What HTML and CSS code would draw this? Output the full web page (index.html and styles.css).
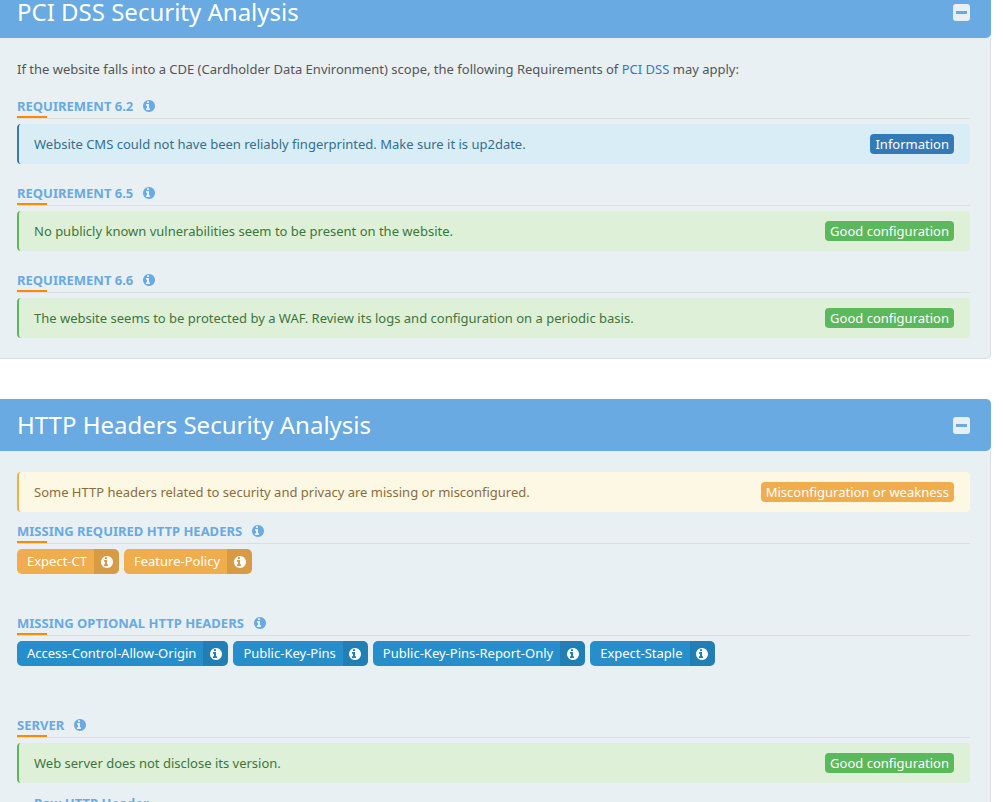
FILE: index.html
```html
<!DOCTYPE html>
<html lang="en">
<head>
<meta charset="utf-8">
<title>Website Security Test</title>
<link rel="stylesheet" href="styles.css">
</head>
<body>
<svg class="sprite" aria-hidden="true">
  <symbol id="info" viewBox="128 128 1536 1536"><path d="M1024 1376v-160q0-14-9-23t-23-9h-96v-512q0-14-9-23t-23-9h-320q-14 0-23 9t-9 23v160q0 14 9 23t23 9h96v320h-96q-14 0-23 9t-9 23v160q0 14 9 23t23 9h448q14 0 23-9t9-23zM896 480v-160q0-14-9-23t-23-9h-192q-14 0-23 9t-9 23v160q0 14 9 23t23 9h192q14 0 23-9t9-23zM1664 896q0 209-103 385.5t-279.5 279.5-385.5 103-385.5-103-279.5-279.5-103-385.5 103-385.5 279.5-279.5 385.5-103 385.5 103 279.5 279.5 103 385.5z" transform="translate(0 0)"/></symbol>
  <symbol id="minus" viewBox="0 0 17 17"><path fill-rule="evenodd" d="M3 0h11a3 3 0 0 1 3 3v11a3 3 0 0 1-3 3H3a3 3 0 0 1-3-3V3a3 3 0 0 1 3-3zM3 7v3h11V7z"/></symbol>
</svg>
<main class="page">
  <section class="panel">
    <header class="panel-header">
      <h2 class="panel-title">PCI DSS Security Analysis</h2>
      <button class="toggle" type="button" aria-label="Collapse PCI DSS Security Analysis"><svg class="toggle-icon"><use href="#minus"/></svg></button>
    </header>
    <div class="panel-body">
      <p class="intro">If the website falls into a CDE (Cardholder Data Environment) scope, the following Requirements of <a class="link" href="#">PCI DSS</a> may apply:</p>
      <h3 class="heading">REQUIREMENT 6.2 <svg class="icon"><use href="#info"/></svg></h3>
      <div class="alert info"><span>Website CMS could not have been reliably fingerprinted. Make sure it is up2date.</span><span class="label">Information</span></div>
      <h3 class="heading">REQUIREMENT 6.5 <svg class="icon"><use href="#info"/></svg></h3>
      <div class="alert good"><span>No publicly known vulnerabilities seem to be present on the website.</span><span class="label">Good configuration</span></div>
      <h3 class="heading">REQUIREMENT 6.6 <svg class="icon"><use href="#info"/></svg></h3>
      <div class="alert good"><span>The website seems to be protected by a WAF. Review its logs and configuration on a periodic basis.</span><span class="label">Good configuration</span></div>
    </div>
  </section>
  <section class="panel">
    <header class="panel-header">
      <h2 class="panel-title">HTTP Headers Security Analysis</h2>
      <button class="toggle" type="button" aria-label="Collapse HTTP Headers Security Analysis"><svg class="toggle-icon"><use href="#minus"/></svg></button>
    </header>
    <div class="panel-body">
      <div class="alert warning summary"><span>Some HTTP headers related to security and privacy are missing or misconfigured.</span><span class="label">Misconfiguration or weakness</span></div>
      <h3 class="heading">MISSING REQUIRED HTTP HEADERS <svg class="icon"><use href="#info"/></svg></h3>
      <ul class="tags required">
        <li class="tag"><span class="tag-name">Expect-CT</span><span class="tag-info"><svg class="icon"><use href="#info"/></svg></span></li>
        <li class="tag"><span class="tag-name">Feature-Policy</span><span class="tag-info"><svg class="icon"><use href="#info"/></svg></span></li>
      </ul>
      <h3 class="heading">MISSING OPTIONAL HTTP HEADERS <svg class="icon"><use href="#info"/></svg></h3>
      <ul class="tags optional">
        <li class="tag"><span class="tag-name">Access-Control-Allow-Origin</span><span class="tag-info"><svg class="icon"><use href="#info"/></svg></span></li>
        <li class="tag"><span class="tag-name">Public-Key-Pins</span><span class="tag-info"><svg class="icon"><use href="#info"/></svg></span></li>
        <li class="tag"><span class="tag-name">Public-Key-Pins-Report-Only</span><span class="tag-info"><svg class="icon"><use href="#info"/></svg></span></li>
        <li class="tag"><span class="tag-name">Expect-Staple</span><span class="tag-info"><svg class="icon"><use href="#info"/></svg></span></li>
      </ul>
      <h3 class="heading">SERVER <svg class="icon"><use href="#info"/></svg></h3>
      <div class="alert good server"><span>Web server does not disclose its version.</span><span class="label">Good configuration</span></div>
      <h4 class="raw-title">Raw HTTP Header</h4>
    </div>
  </section>
</main>
</body>
</html>
```
FILE: styles.css
```css
* { box-sizing: border-box; }
body {
  margin: 0;
  background: #fff;
  color: #555;
  font: 13px/20px "Noto Sans", "Open Sans", sans-serif;
}
.sprite { display: none; }
.page {
  display: flex;
  flex-direction: column;
  gap: 40px;
  height: 100vh;
  padding-right: 12px;
  overflow: hidden;
}
.panel {
  flex: none;
  background: #e8f0f4;
  border-radius: 0 5px 5px 0;
}
/* The first panel is scrolled partly out of view. */
.panel:first-child { margin-top: -14px; }
.panel-header {
  display: flex;
  align-items: center;
  justify-content: space-between;
  height: 52px;
  padding: 0 21px 0 17px;
  background: #68aae1;
  border-radius: 0 5px 5px 0;
}
.panel-title {
  margin: 0;
  color: #fff;
  font-size: 24px;
  font-weight: 400;
  line-height: 32px;
}
.toggle {
  display: flex;
  padding: 0;
  border: 0;
  background: none;
  color: #e8f0f4;
  cursor: pointer;
}
.toggle-icon { width: 17px; height: 17px; fill: currentColor; }
.panel-body {
  padding: 21px 20px 20px 17px;
  border: solid #ddd;
  border-width: 0 1px 1px 0;
  border-radius: 0 0 5px 0;
}
.intro { margin: 0 0 15px; }
.link { color: #337ab7; text-decoration: none; }
.heading {
  display: flex;
  align-items: center;
  gap: 10px;
  position: relative;
  margin: 0 0 5px;
  border-bottom: 1px solid #ddd;
  color: #68aae1;
  font-size: 13px;
  font-weight: 700;
  line-height: 24px;
}
.heading::after {
  content: "";
  position: absolute;
  left: 0;
  bottom: 0;
  width: 30px;
  height: 2px;
  background: #ff8a00;
}
.icon { flex: none; width: 12px; height: 12px; fill: currentColor; }
.alert {
  display: flex;
  align-items: center;
  justify-content: space-between;
  gap: 16px;
  min-height: 40px;
  padding: 10px 16px 10px 15px;
  border-left: 2px solid;
  border-radius: 4px;
}
.alert + .heading { margin-top: 17px; }
.alert.summary + .heading { margin-top: 7px; }
.info { background: #d9edf7; border-color: #337ab7; color: #31708f; }
.good { background: #dff0d8; border-color: #5cb85c; color: #3c763d; }
.warning { background: #fcf8e3; border-color: #f0ad4e; color: #8a6d3b; }
.label {
  flex: none;
  padding: 0 5px;
  border-radius: 4px;
  color: #fff;
}
.info .label { background: #337ab7; }
.good .label { background: #5cb85c; }
.warning .label { background: #f0ad4e; }
.tags {
  display: flex;
  flex-wrap: wrap;
  gap: 5px;
  margin: 0;
  padding: 0;
  list-style: none;
}
.required { margin-bottom: 37px; }
.optional { margin-bottom: 47px; }
.tag {
  display: flex;
  overflow: hidden;
  border-radius: 5px;
  color: #fff;
  line-height: 25px;
}
.required .tag { background: #f0ad4e; }
.optional .tag { background: #268ec9; }
.tag-name { padding: 0 7px 0 10px; }
.tag-info {
  display: flex;
  align-items: center;
  justify-content: center;
  width: 25px;
  background: rgba(0, 0, 0, 0.1);
}
.raw-title {
  margin: 10px 0 0 17px;
  color: #68aae1;
  font-size: 13px;
  font-weight: 700;
}
```
